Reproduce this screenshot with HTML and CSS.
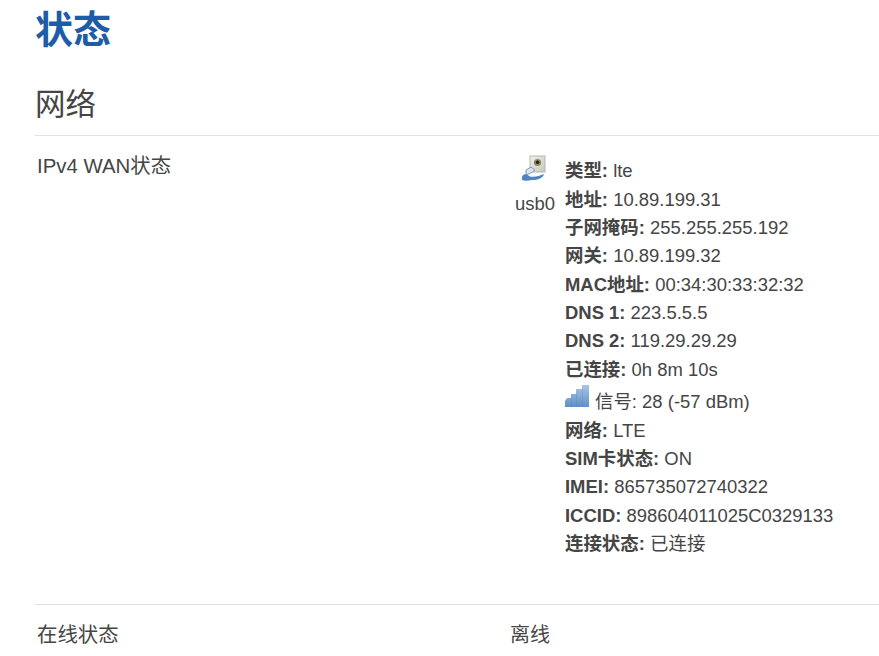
FILE: index.html
```html
<!DOCTYPE html>
<html lang="zh">
<head>
<meta charset="utf-8">
<title>状态</title>
<link rel="stylesheet" href="styles.css">
</head>
<body>
<main class="page">
  <h1 class="title">状态</h1>
  <h2 class="section">网络</h2>
  <div class="row wan">
    <div class="label">IPv4 WAN状态</div>
    <div class="value">
      <div class="iface">
        <svg class="iface-icon" width="26" height="27" viewBox="0 0 26 27">
          <defs>
            <linearGradient id="scr" x1="0" y1="0" x2="1" y2="1"><stop offset="0" stop-color="#f2f2ee"/><stop offset="1" stop-color="#c4c6c0"/></linearGradient>
          </defs>
          <rect x="9" y="1" width="15" height="16" fill="url(#scr)" stroke="#b5b8b2" stroke-width="1"/>
          <circle cx="16.500" cy="7.500" r="3.600" fill="#8f8a62"/>
          <circle cx="16.500" cy="7.200" r="1.800" fill="#26261e"/>
          <path d="M10 12 L5 15 L5 20 L10 18 L14 15 Z" fill="#dfe3ea" stroke="#7f9ac0" stroke-width="1"/>
          <path d="M1 22 C2 18 6 19 8 21 C12 23 18 21 23 19 C22 23 17 25 11 25 C7 26 3 26 1 25 Z" fill="#4f86c2"/>
        </svg>
        <span>usb0</span>
      </div>
      <div class="details">
        <div class="line"><b>类型:</b> lte</div>
        <div class="line"><b>地址:</b> 10.89.199.31</div>
        <div class="line"><b>子网掩码:</b> 255.255.255.192</div>
        <div class="line"><b>网关:</b> 10.89.199.32</div>
        <div class="line"><b>MAC地址:</b> 00:34:30:33:32:32</div>
        <div class="line"><b>DNS 1:</b> 223.5.5.5</div>
        <div class="line"><b>DNS 2:</b> 119.29.29.29</div>
        <div class="line"><b>已连接:</b> 0h 8m 10s</div>
        <div class="line signal">
          <svg class="signal-icon" width="25" height="24" viewBox="0 0 25 24">
            <defs>
              <linearGradient id="bar" x1="0" y1="0" x2="0" y2="1"><stop offset="0" stop-color="#a9c6e6"/><stop offset="1" stop-color="#5f90c8"/></linearGradient>
            </defs>
            <path d="M0 23 V17 Q1 14 3 14 H6 V10 H11 V5 H17 V1 H24 V23 Z" fill="url(#bar)"/>
            <path d="M6.500 14V23M11.500 10V23M17.500 5V23" stroke="#3f73b0" stroke-opacity=".2" fill="none"/>
          </svg>
          <span>信号: 28 (-57 dBm)</span>
        </div>
        <div class="line"><b>网络:</b> LTE</div>
        <div class="line"><b>SIM卡状态:</b> ON</div>
        <div class="line"><b>IMEI:</b> 865735072740322</div>
        <div class="line"><b>ICCID:</b> 898604011025C0329133</div>
        <div class="line"><b>连接状态:</b> 已连接</div>
      </div>
    </div>
  </div>
  <div class="row online">
    <div class="label">在线状态</div>
    <div class="value">离线</div>
  </div>
</main>
</body>
</html>
```
FILE: styles.css
```css
html, body {
  margin: 0;
  padding: 0;
  background: #fff;
}
body {
  height: 656px;
  overflow: hidden;
  font-family: "Liberation Sans", "Noto Sans CJK SC", sans-serif;
  font-size: 18.45px;
  line-height: 28.35px;
  color: #454545;
}
.page {
  padding-left: 35px;
}
.title {
  margin: 0;
  padding-top: 8px;
  font-size: 38px;
  line-height: 44px;
  font-weight: 700;
  color: #1f5ca8;
}
.section {
  margin: 30px 0 0;
  height: 53px;
  font-size: 30.5px;
  line-height: 44px;
  font-weight: 400;
  color: #454545;
  border-bottom: 1px solid #e2e2e2;
}
.row {
  display: flex;
}
.label {
  width: 473px;
  padding-left: 2px;
  flex: none;
  font-size: 20.4px;
}
.wan {
  height: 469px;
  padding-top: 16px;
  box-sizing: border-box;
  border-bottom: 1px solid #e2e2e2;
}
.value {
  display: flex;
}
.iface {
  width: 55px;
  margin-top: 3px;
  padding-left: 5px;
  box-sizing: border-box;
  flex: none;
  display: flex;
  flex-direction: column;
  align-items: flex-start;
}
.iface-icon {
  margin-bottom: 8px;
  margin-left: 6px;
  filter: blur(.4px);
}
.details {
  padding-top: 5.2px;
}
.line {
  white-space: nowrap;
}
.line b {
  font-weight: 700;
}
.signal {
  display: flex;
  align-items: center;
  height: 32.8px;
  gap: 5px;
}
.signal-icon {
  margin-bottom: 9px;
  filter: blur(.4px);
}
.signal span {
  padding-top: 4px;
}
.online {
  padding-top: 16px;
}
.online .value {
  font-size: 20px;
}
```
